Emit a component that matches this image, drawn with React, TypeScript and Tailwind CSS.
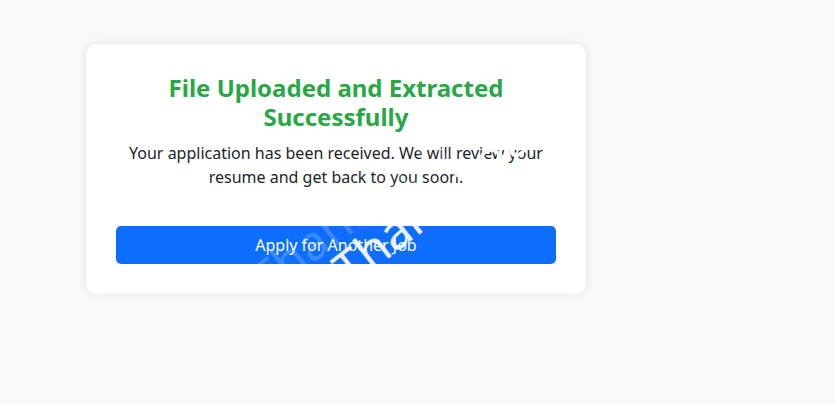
export default function App() {
  return (
    <div
      className="min-h-[405px] w-[835px] bg-[#f8f9fa] pt-[44px] pl-[86px]"
      style={{ fontFamily: '"Noto Sans", "Open Sans", sans-serif' }}
    >
      <div className="relative w-[500px] overflow-hidden rounded-[10px] bg-white p-[30px] text-center shadow-[0_0_10px_rgba(0,0,0,0.1)]">
        <h2 className="-mt-px text-[24px] font-bold leading-[29px] text-[#28a745]">
          File Uploaded and Extracted Successfully
        </h2>
        <p className="mt-[10px] text-[16px] leading-[24px] text-[#212529]">
          Your application has been received. We will review your resume and get back to you soon.
        </p>
        <button className="mt-[37px] h-[38px] w-full rounded-[5px] bg-[#0d6efd] text-[16px] text-white">
          Apply for Another Job
        </button>
        {/* watermark */}
        <div className="pointer-events-none absolute left-[268px] top-[201px] origin-bottom-left -rotate-[38deg] whitespace-nowrap text-[48px] leading-none text-white/90">
          Thank you
        </div>
        <div className="pointer-events-none absolute left-[185px] top-[212px] origin-bottom-left -rotate-[38deg] whitespace-nowrap text-[48px] leading-none text-white/20">
          Thank you
        </div>
      </div>
    </div>
  );
}
